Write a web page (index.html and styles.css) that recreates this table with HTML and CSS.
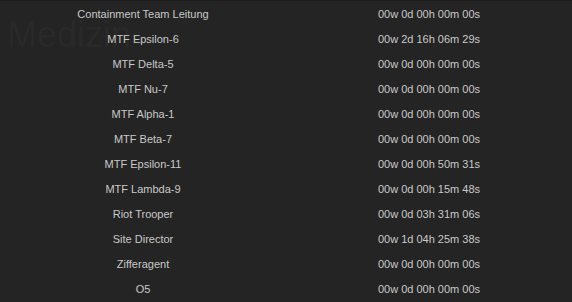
FILE: index.html
```html
<!DOCTYPE html>
<html>
<head>
<meta charset="utf-8">
<link rel="stylesheet" href="styles.css">
</head>
<body>
<div class="panel">
  <div class="ghost" aria-hidden="true">Medizin</div>
  <div class="rows">
    <div class="row"><span class="name">Containment Team Leitung</span><span class="time">00w 0d 00h 00m 00s</span></div>
    <div class="row"><span class="name">MTF Epsilon-6</span><span class="time">00w 2d 16h 06m 29s</span></div>
    <div class="row"><span class="name">MTF Delta-5</span><span class="time">00w 0d 00h 00m 00s</span></div>
    <div class="row"><span class="name">MTF Nu-7</span><span class="time">00w 0d 00h 00m 00s</span></div>
    <div class="row"><span class="name">MTF Alpha-1</span><span class="time">00w 0d 00h 00m 00s</span></div>
    <div class="row"><span class="name">MTF Beta-7</span><span class="time">00w 0d 00h 00m 00s</span></div>
    <div class="row"><span class="name">MTF Epsilon-11</span><span class="time">00w 0d 00h 50m 31s</span></div>
    <div class="row"><span class="name">MTF Lambda-9</span><span class="time">00w 0d 00h 15m 48s</span></div>
    <div class="row"><span class="name">Riot Trooper</span><span class="time">00w 0d 03h 31m 06s</span></div>
    <div class="row"><span class="name">Site Director</span><span class="time">00w 1d 04h 25m 38s</span></div>
    <div class="row"><span class="name">Zifferagent</span><span class="time">00w 0d 00h 00m 00s</span></div>
    <div class="row"><span class="name">O5</span><span class="time">00w 0d 00h 00m 00s</span></div>
  </div>
</div>
</body>
</html>
```
FILE: styles.css
```css
html, body {
  margin: 0;
  padding: 0;
  background: #242424;
}
.panel {
  position: relative;
  width: 572px;
  height: 302px;
  overflow: hidden;
  background: #242424;
  border-top: 1px solid #1b1b1b;
  box-sizing: border-box;
  font-family: "Liberation Sans", Arial, sans-serif;
  font-size: 11px;
  color: #c9c9c9;
}
.ghost {
  position: absolute;
  left: 7px;
  top: 14px;
  color: #292929;
  font-family: "Liberation Sans", Arial, sans-serif;
  font-size: 36px;
  line-height: 40px;
  pointer-events: none;
}
.rows {
  position: relative;
  display: flex;
  flex-direction: column;
}
.row {
  display: grid;
  grid-template-columns: 286px 286px;
  height: 25px;
  align-items: center;
}
.name, .time {
  text-align: center;
}
```
